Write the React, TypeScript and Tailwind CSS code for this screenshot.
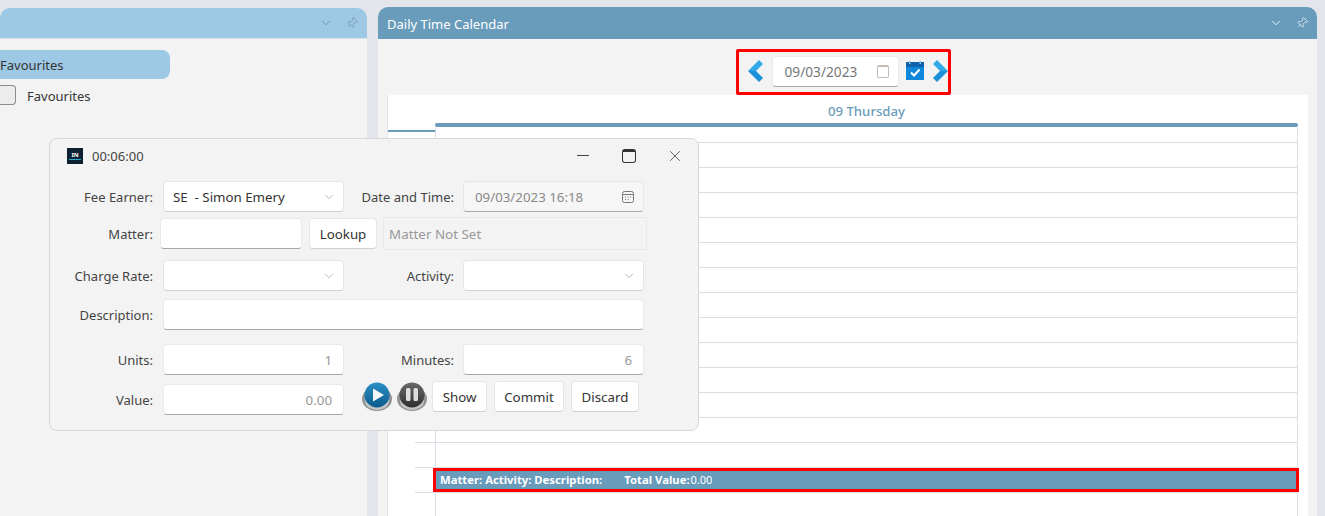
import { ChevronDown, Pin, X } from 'lucide-react';

const FONT = "font-['Noto_Sans','Open_Sans',sans-serif]";

const inputCls = 'h-[31px] bg-white rounded-[4px] border border-[#e9e9e9] border-b-[#a8a8a8]';
const selectCls = 'h-[31px] bg-white rounded-[4px] border border-[#e6e6e6] border-b-[#d0d0d0]';
const btnCls = 'h-[31px] bg-white rounded-[4px] border border-[#e6e6e6] border-b-[#cfcfcf] text-[13.3px] text-[#333] flex items-center justify-center';

// row tops from the calendar: one short row, then a line every 25px
const rows = Array.from({ length: 15 }, (_, i) => i);

function Label({ w, children }: { w: string; children: string }) {
  return <div className={`${w} pt-[2px] text-right text-[13px] text-[#444] shrink-0`}>{children}</div>;
}

function Select({ value, className }: { value?: string; className: string }) {
  return (
    <div className={`${selectCls} ${className} flex items-center justify-between pl-[9px] pr-[7px] text-[13.3px] text-[#333]`}>
      <span className="whitespace-pre pt-[2px]">{value}</span>
      <ChevronDown size={14} strokeWidth={1.2} className="text-[#999]" />
    </div>
  );
}

function NumberBox({ value, className }: { value: string; className: string }) {
  return (
    <div className={`${inputCls} ${className} flex items-center justify-end pr-[11px] pt-[2px] text-[13.3px] text-[#999]`}>
      {value}
    </div>
  );
}

function Arrow({ flip }: { flip?: boolean }) {
  return (
    <svg width="16" height="22" viewBox="0 0 16 22" className={flip ? '-scale-x-100' : ''}>
      <path d="M11 0 L15 4 L8 11 L0 11 Z" fill="#2fa9e8" />
      <path d="M0 11 L8 11 L15 18 L11 22 Z" fill="#1b90d8" />
    </svg>
  );
}

function CalendarCheck() {
  return (
    <svg width="18" height="19" viewBox="0 0 18 19">
      <rect x="0" y="1" width="18" height="18" fill="#0c87d9" />
      <rect x="0" y="1" width="18" height="5" fill="#0d62ad" />
      <rect x="3" y="0" width="1.5" height="3" fill="#7cc4ee" />
      <rect x="13.5" y="0" width="1.5" height="3" fill="#7cc4ee" />
      <path d="M5 11.5 L8 14.5 L13.5 8.5" fill="none" stroke="#fff" strokeWidth="2" />
    </svg>
  );
}

function SmallCalendar() {
  return (
    <svg width="12" height="12" viewBox="0 0 12 12" fill="none">
      <rect x="0.5" y="0.5" width="11" height="11" rx="2" stroke="#777" />
      <path d="M1 3.5 H11" stroke="#777" />
      <path d="M3 6 H4 M5.5 6 H6.5 M8 6 H9 M3 8.5 H4 M5.5 8.5 H6.5" stroke="#777" />
    </svg>
  );
}

function RoundButton({ kind }: { kind: 'play' | 'pause' }) {
  const id = kind === 'play' ? 'playFill' : 'pauseFill';
  const top = kind === 'play' ? '#2b8fc4' : '#6a6a6a';
  const bottom = kind === 'play' ? '#0b5a8c' : '#2e2e2e';
  return (
    <svg width="30" height="29" viewBox="0 0 30 29">
      <defs>
        <linearGradient id={id} x1="0" y1="0" x2="0" y2="1">
          <stop offset="0" stopColor={top} />
          <stop offset="1" stopColor={bottom} />
        </linearGradient>
      </defs>
      <ellipse cx="15" cy="17" rx="15" ry="12" fill="#8f9498" />
      <ellipse cx="15" cy="19" rx="12" ry="9" fill="#c4c6c8" />
      <circle cx="15" cy="13" r="12.5" fill={`url(#${id})`} />
      {kind === 'play' ? (
        <path d="M11 6.5 L22 13 L11 19.5 Z" fill="#f2f7fa" />
      ) : (
        <>
          <rect x="9" y="6" width="4.5" height="13" rx="1.5" fill="#dedede" />
          <rect x="16.5" y="6" width="4.5" height="13" rx="1.5" fill="#dedede" />
        </>
      )}
    </svg>
  );
}

function PanelHeader({ title, tone }: { title?: string; tone: 'light' | 'dark' }) {
  const dark = tone === 'dark';
  return (
    <div className={`flex items-center justify-between rounded-t-[10px] pl-[9px] pr-[9px] ${dark ? 'h-[32px] bg-[#699bbb] text-white' : 'h-[30px] bg-[#9ec9e4] text-[#6f8ea3]'}`}>
      <span className="text-[13px] pt-[3px]">{title}</span>
      <div className="flex items-center gap-[13px]">
        <ChevronDown size={14} strokeWidth={1.5} />
        <Pin size={12} strokeWidth={1.3} className="rotate-45" />
      </div>
    </div>
  );
}

export default function App() {
  return (
    <div className={`${FONT} relative w-[1325px] h-[516px] overflow-hidden bg-[#e2e6ea] flex items-start pt-[7px]`}>
      {/* Left panel */}
      <div className="w-[367px] mt-[1px] rounded-tr-[10px] shrink-0">
        <PanelHeader tone="light" />
        <div className="h-[490px] bg-[#f3f3f3] border-t border-[#e0e4e8] pt-[11px]">
          <div className="w-[170px] h-[29px] bg-[#9ec9e4] rounded-r-[8px] pt-[2px] flex items-center text-[13px] text-[#333]">
            Favourites
          </div>
          <div className="flex items-center mt-[6px] h-[20px]">
            <div className="w-[16px] h-[20px] bg-[#ececec] border border-[#8c8c8c] border-l-0 rounded-r-[4px]" />
            <span className="ml-[11px] pt-[4px] text-[13px] text-[#333]">Favourites</span>
          </div>
        </div>
      </div>

      {/* Daily Time Calendar panel */}
      <div className="w-[939px] ml-[11px] shrink-0">
        <PanelHeader title="Daily Time Calendar" tone="dark" />
        <div className="h-[480px] bg-[#f3f3f3] pl-[9px] pr-[9px] pt-[10px]">
          <div className="flex justify-center pr-[9px]">
            <div className="w-[215px] h-[46px] border-[3px] border-[#ff0000] rounded-[2px] flex items-center pl-[9px] pb-[2px]">
              <Arrow />
              <div className={`${inputCls} w-[127px] ml-[8px] flex items-center justify-between pl-[12px] pr-[9px] text-[13.7px] text-[#777]`}>
                <span className="pt-[2px]">09/03/2023</span>
                <span className="w-[12px] h-[13px] border border-[#c4bcb4] rounded-[2px] border-t-2" />
              </div>
              <div className="ml-[7px] -mt-[1px]"><CalendarCheck /></div>
              <div className="ml-[8px]"><Arrow flip /></div>
            </div>
          </div>

          <div className="bg-white h-[425px] overflow-hidden border-l border-[#e4e4ec] w-[921px]">
            <div className="h-[28px] ml-[47px] w-[863px] flex items-end justify-center pb-[1px] text-[13.2px] font-medium text-[#699bbb]">
              09 Thursday
            </div>
            <div className="ml-[47px] w-[863px] h-[4px] bg-[#699bbb] rounded-full" />
            <div className="flex h-[16px]">
              <div className="w-[47px] pt-[3px]">
                <div className="h-[2px] bg-[#699bbb]" />
              </div>
              <div className="w-[863px] border-x border-b border-[#dcdce6]" />
            </div>
            {rows.map(i => (
              <div key={i} className="flex h-[25px]">
                <div className="w-[47px] flex justify-end">
                  <div className="w-[20px] border-b border-[#dcdce6]" />
                </div>
                {i === 13 ? (
                  <div className="relative w-[863px] border-x border-b border-[#dcdce6]">
                    <div className="absolute left-[-3px] right-[-2px] top-0 h-[24px] bg-[#699bbb] border-[3px] border-[#ff0000] flex items-center pl-[4px] text-[11.3px] text-white">
                      <span className="font-bold">Matter: Activity: Description:</span>
                      <span className="font-bold ml-[22px]">Total Value:</span>
                      <span className="ml-[1px] text-[11px]">0.00</span>
                    </div>
                  </div>
                ) : (
                  <div className="w-[863px] border-x border-b border-[#dcdce6]" />
                )}
              </div>
            ))}
          </div>
        </div>
      </div>

      {/* Floating timer dialog */}
      <div className="absolute left-[49px] top-[138px] w-[650px] h-[293px] bg-[#f3f3f3] border border-[#d6d8de] rounded-[8px]">
        <div className="flex items-center h-[35px] pl-[17px] pr-[14px]">
          <div className="-mt-[2px] w-[16px] h-[16px] bg-[#0c2233] flex flex-col items-center justify-center">
            <span className="text-[6px] leading-[7px] font-bold text-white">IN</span>
            <span className="w-[12px] h-[1px] bg-[#2aa6c6]" />
          </div>
          <span className="ml-[9px] text-[13px] text-[#444]">00:06:00</span>
          <div className="ml-auto -mt-[2px] flex items-center">
            <span className="w-[12px] h-[1px] bg-[#444]" />
            <span className="ml-[33px] w-[14px] h-[14px] border border-[#333] border-t-[3px] rounded-[3px]" />
            <X size={18} strokeWidth={1} className="ml-[30px] text-[#333]" />
          </div>
        </div>

        <div className="mt-[7px] flex items-center h-[31px]">
          <Label w="w-[103px]">Fee Earner:</Label>
          <Select value="SE  - Simon Emery" className="w-[181px] ml-[10px]" />
          <Label w="w-[110px]">Date and Time:</Label>
          <div className="ml-[9px] w-[181px] h-[31px] bg-[#f6f6f6] rounded-[4px] border border-[#e6e6e6] border-b-[#a8a8a8] flex items-center justify-between pl-[11px] pr-[9px] text-[13.3px] text-[#8a8a8a]">
            <span className="pt-[2px]">09/03/2023 16:18</span>
            <SmallCalendar />
          </div>
        </div>

        <div className="mt-[6px] flex items-center h-[31px]">
          <Label w="w-[103px]">Matter:</Label>
          <div className={`${inputCls} w-[142px] ml-[7px]`} />
          <div className={`${btnCls} w-[68px] ml-[7px]`}><span className="pt-[2px]">Lookup</span></div>
          <div className="ml-[6px] w-[264px] h-[33px] bg-[#f3f3f3] border border-[#e8e8e8] flex items-center pl-[5px] text-[13.4px] text-[#999]">
            <span className="pt-[2px]">Matter Not Set</span>
          </div>
        </div>

        <div className="mt-[11px] flex items-center h-[31px]">
          <Label w="w-[103px]">Charge Rate:</Label>
          <Select className="w-[181px] ml-[10px]" />
          <Label w="w-[110px]">Activity:</Label>
          <Select className="w-[181px] ml-[9px]" />
        </div>

        <div className="mt-[8px] flex items-center h-[31px]">
          <Label w="w-[103px]">Description:</Label>
          <div className={`${inputCls} w-[481px] ml-[10px]`} />
        </div>

        <div className="mt-[14px] flex items-center h-[31px]">
          <Label w="w-[103px]">Units:</Label>
          <NumberBox value="1" className="w-[181px] ml-[10px]" />
          <Label w="w-[110px]">Minutes:</Label>
          <NumberBox value="6" className="w-[181px] ml-[9px]" />
        </div>

        <div className="mt-[9px] flex items-center h-[31px]">
          <Label w="w-[103px]">Value:</Label>
          <NumberBox value="0.00" className="w-[181px] ml-[10px]" />
          <div className="ml-[18px] self-start -mt-[2px] flex items-center gap-[5px]">
            <RoundButton kind="play" />
            <RoundButton kind="pause" />
          </div>
          <div className="ml-[5px] self-start -mt-[3px] flex items-center gap-[7px]">
            <div className={`${btnCls} w-[55px]`}><span className="pt-[2px]">Show</span></div>
            <div className={`${btnCls} w-[70px]`}><span className="pt-[2px]">Commit</span></div>
            <div className={`${btnCls} w-[68px]`}><span className="pt-[2px]">Discard</span></div>
          </div>
        </div>
      </div>
    </div>
  );
}
